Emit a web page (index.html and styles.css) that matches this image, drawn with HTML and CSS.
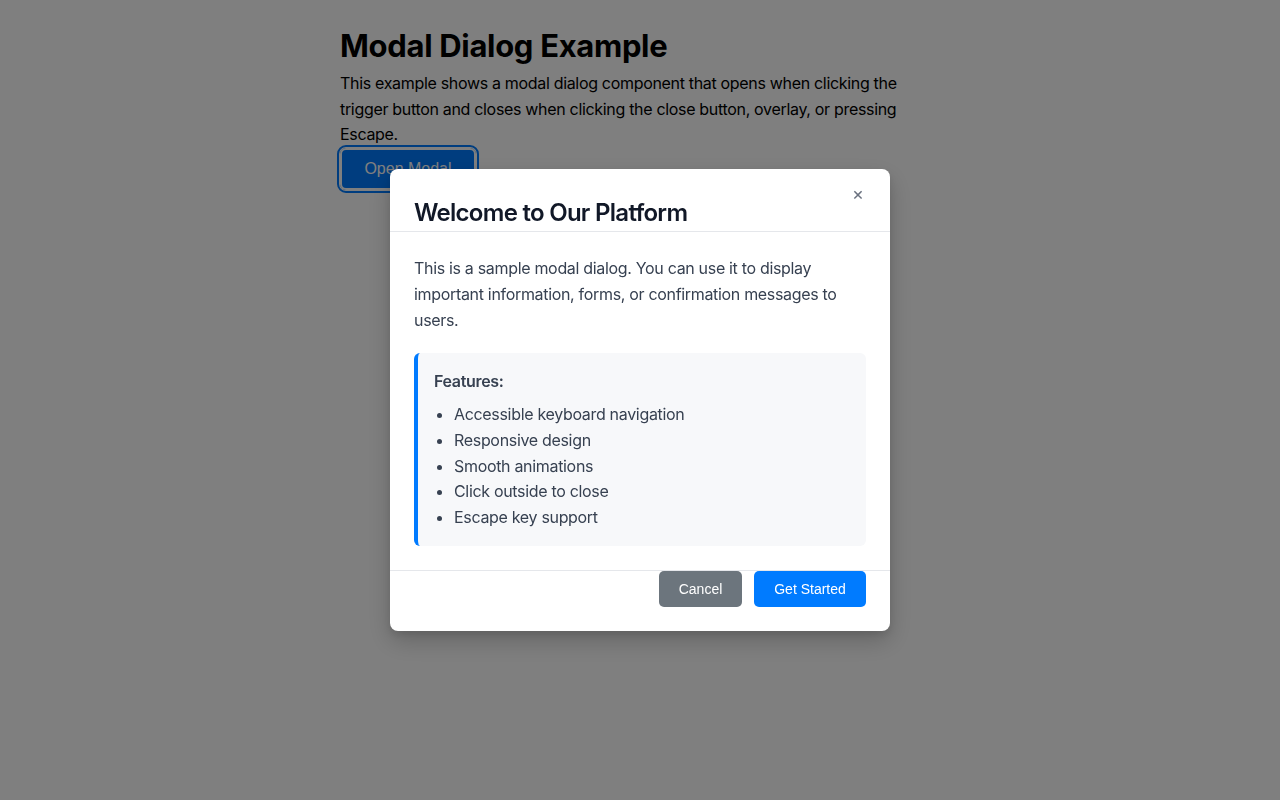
FILE: index.html
```html
<!DOCTYPE html>
<html lang="en">
<head>
<meta charset="utf-8">
<title>Modal Dialog Example</title>
<link rel="stylesheet" href="styles.css">
</head>
<body>
<main class="page">
  <h1 class="page-title">Modal Dialog Example</h1>
  <p class="page-intro">This example shows a modal dialog component that opens when clicking the trigger button and closes when clicking the close button, overlay, or pressing Escape.</p>
  <button class="trigger" type="button">Open Modal</button>
</main>

<div class="overlay">
  <div class="modal" role="dialog" aria-modal="true" aria-labelledby="modal-title">
    <div class="modal-header">
      <h2 id="modal-title" class="modal-title">Welcome to Our Platform</h2>
      <button class="modal-close" type="button" aria-label="Close">&times;</button>
    </div>
    <div class="modal-body">
      <p class="modal-text">This is a sample modal dialog. You can use it to display important information, forms, or confirmation messages to users.</p>
      <div class="features">
        <strong class="features-title">Features:</strong>
        <ul class="features-list">
          <li>Accessible keyboard navigation</li>
          <li>Responsive design</li>
          <li>Smooth animations</li>
          <li>Click outside to close</li>
          <li>Escape key support</li>
        </ul>
      </div>
    </div>
    <div class="modal-footer">
      <button class="btn btn-secondary" type="button">Cancel</button>
      <button class="btn btn-primary" type="button">Get Started</button>
    </div>
  </div>
</div>
</body>
</html>
```

FILE: styles.css
```css
* { box-sizing: border-box; }

html, body {
  margin: 0;
  height: 100%;
}

body {
  background: #ffffff;
  font-family: Inter, "Noto Sans", sans-serif;
  letter-spacing: -0.02em;
  color: #000;
}

.page {
  width: 600px;
  margin: 0 auto;
  padding-top: 27px;
}

.page-title {
  margin: 0;
  font-size: 31px;
  line-height: 38px;
  font-weight: 700;
}

.page-intro {
  margin: 6px 0 0;
  font-size: 16px;
  line-height: 25.6px;
}

.trigger {
  margin-top: 0;
  font-family: "Liberation Sans", Arial, sans-serif;
  letter-spacing: 0;
  font-size: 16px;
  color: #fff;
  background: #007bff;
  border: none;
  border-radius: 6px;
  padding: 0 24px;
  height: 42px;
  width: 136px;
  outline: 2px solid #007bff;
  outline-offset: 1px;
  box-shadow: inset 0 0 0 2px #ffffff;
}

.overlay {
  position: fixed;
  inset: 0;
  background: rgba(0, 0, 0, 0.5);
  display: flex;
  justify-content: center;
  align-items: flex-start;
  padding-top: 169px;
}

.modal {
  width: 500px;
  background: #fff;
  border-radius: 8px;
  box-shadow: 0 10px 25px rgba(0, 0, 0, 0.2), 0 4px 10px rgba(0, 0, 0, 0.1);
}

.modal-header {
  position: relative;
  padding: 31px 24px 5px;
  border-bottom: 1px solid #e5e7eb;
}

.modal-title {
  margin: 0;
  font-size: 24px;
  line-height: 26px;
  font-weight: 600;
  letter-spacing: -0.03em;
  color: #111827;
}

.modal-close {
  position: absolute;
  top: 15px;
  right: 26px;
  width: 24px;
  height: 20px;
  padding: 0;
  border: none;
  background: transparent;
  font-family: Inter, "Noto Sans", sans-serif;
  font-size: 18px;
  line-height: 20px;
  color: #6b7280;
  text-align: right;
}

.modal-body {
  padding: 23px 24px 24px;
}

.modal-text {
  margin: 0;
  font-size: 16px;
  line-height: 26px;
  color: #374151;
}

.features {
  margin-top: 20px;
  background: #f7f8fa;
  border-left: 4px solid #007bff;
  border-radius: 6px;
  padding: 16px 16px 15px;
  color: #374151;
}

.features-title {
  display: block;
  font-size: 16px;
  line-height: 24px;
  font-weight: 600;
}

.features-list {
  margin: 9px 0 0;
  padding-left: 20px;
  font-size: 16px;
  line-height: 25.8px;
}

.modal-footer {
  display: flex;
  justify-content: flex-end;
  gap: 12px;
  padding: 0 24px 24px;
  border-top: 1px solid #e5e7eb;
}

.btn {
  height: 36px;
  padding: 0 16px;
  border: none;
  border-radius: 5px;
  font-family: "Liberation Sans", Arial, sans-serif;
  letter-spacing: 0;
  font-size: 14px;
  color: #fff;
}

.btn-secondary {
  background: #6c757d;
  width: 83px;
}

.btn-primary {
  background: #007bff;
  width: 112px;
}
```
